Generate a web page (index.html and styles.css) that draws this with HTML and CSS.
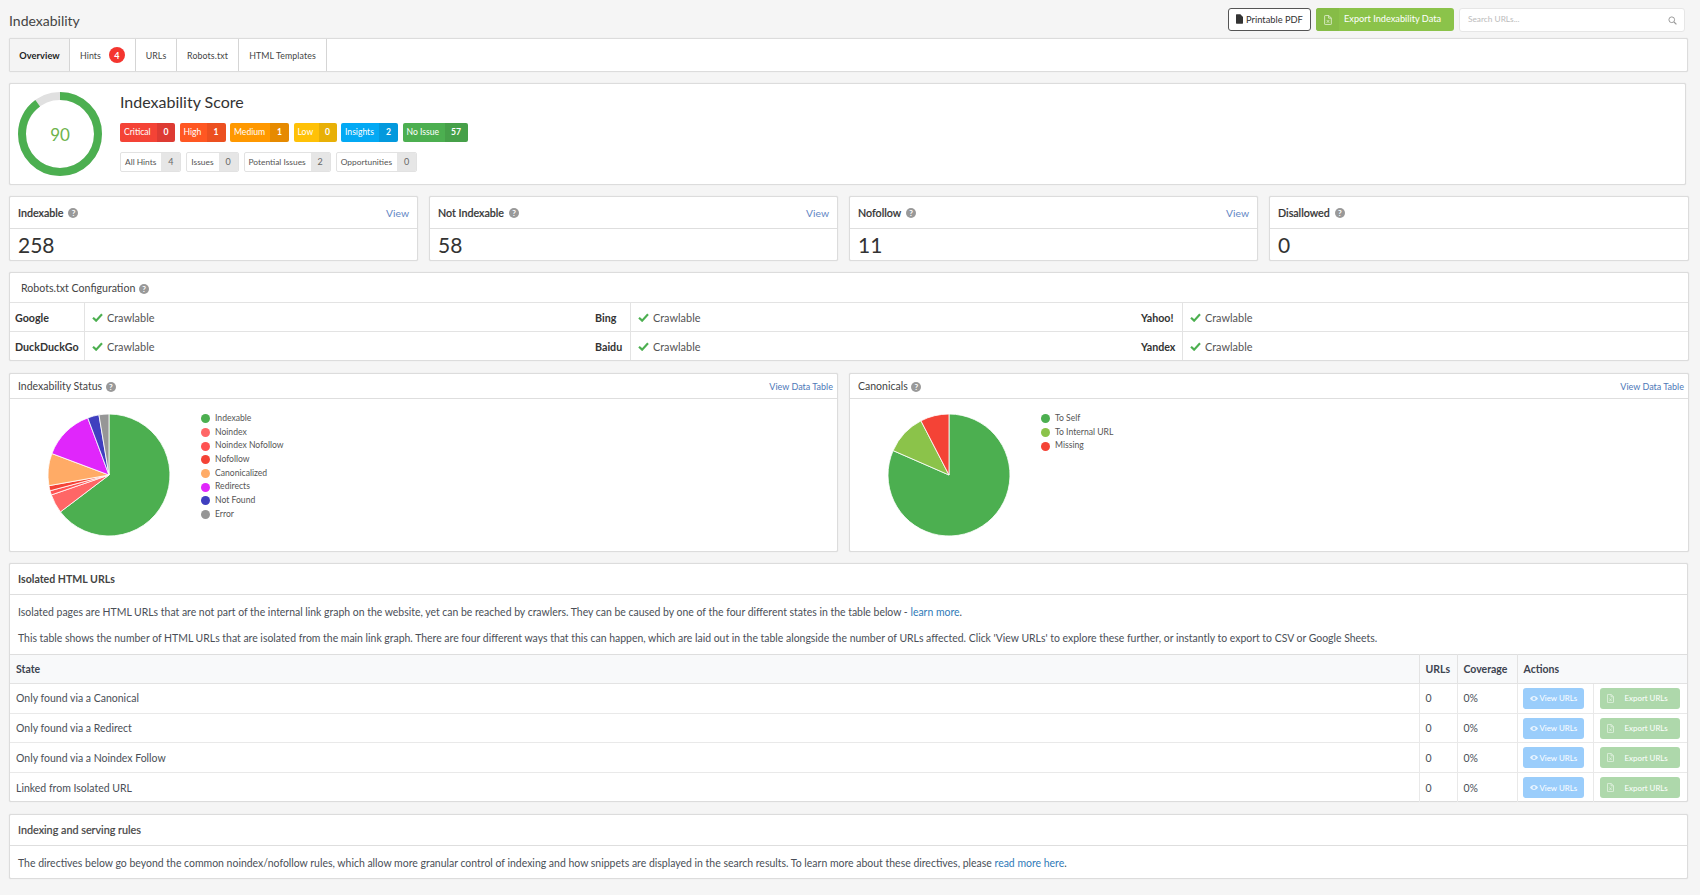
FILE: index.html
```html
<!DOCTYPE html>
<html lang="en">
<head>
<meta charset="utf-8">
<title>Indexability</title>
<link rel="stylesheet" href="styles.css">
</head>
<body>
<svg class="defs" width="0" height="0" aria-hidden="true">
  <symbol id="file" viewBox="0 0 12 16"><path d="M1 0h6.5L12 4.5V15a1 1 0 0 1-1 1H1a1 1 0 0 1-1-1V1a1 1 0 0 1 1-1z" fill="currentColor"/></symbol>
  <symbol id="xls" viewBox="0 0 12 16"><path fill="none" stroke="currentColor" stroke-width="1.3" d="M1.6.7h5.6l4.1 4.1v9.5a1 1 0 0 1-1 1H1.6a1 1 0 0 1-1-1V1.700a1 1 0 0 1 1-1zM7 1v4h4"/><path fill="none" stroke="currentColor" stroke-width="1.2" d="M4 8l4 4.500M8 8l-4 4.500"/></symbol>
  <symbol id="eye" viewBox="0 0 16 10"><path fill="currentColor" d="M8 0C4.600 0 1.700 2 0 5c1.700 3 4.600 5 8 5s6.300-2 8-5c-1.700-3-4.600-5-8-5zm0 8a3 3 0 1 1 0-6 3 3 0 0 1 0 6z"/></symbol>
  <symbol id="check" viewBox="0 0 12 10"><path fill="none" stroke="currentColor" stroke-width="2.400" d="M1 5.200l3.500 3.300L11 1.500"/></symbol>
</svg>

<header class="topbar">
  <h1 class="title">Indexability</h1>
  <div class="top-actions">
    <button class="btn-pdf"><svg class="ico-pdf"><use href="#file"/></svg>Printable PDF</button>
    <button class="btn-export"><span class="btn-export-ico"><svg class="ico-xls"><use href="#xls"/></svg></span><span class="btn-export-text">Export Indexability Data</span></button>
    <div class="search"><span>Search URLs...</span>
      <svg class="ico-search" viewBox="0 0 12 12"><circle cx="5" cy="5" r="3.800" fill="none" stroke="currentColor" stroke-width="1.300"/><path d="M8 8l3.200 3.200" stroke="currentColor" stroke-width="1.500"/></svg>
    </div>
  </div>
</header>

<nav class="card tabs">
  <a class="tab tab-overview active">Overview</a>
  <a class="tab tab-hints">Hints <span class="count">4</span></a>
  <a class="tab tab-urls">URLs</a>
  <a class="tab tab-robots">Robots.txt</a>
  <a class="tab tab-html">HTML Templates</a>
</nav>

<section class="card score">
  <div class="ring">
    <svg viewBox="0 0 84 84" width="84" height="84">
      <circle class="ring-bg" cx="42" cy="42" r="38"/>
      <circle class="ring-fg" cx="42" cy="42" r="38" pathLength="100" stroke-dasharray="90 100" transform="rotate(-90 42 42)"/>
    </svg>
    <span class="ring-val">90</span>
  </div>
  <div class="score-body">
    <h2 class="score-title">Indexability Score</h2>
    <div class="badges">
      <span class="badge critical"><b>Critical</b><i>0</i></span>
      <span class="badge high"><b>High</b><i>1</i></span>
      <span class="badge medium"><b>Medium</b><i>1</i></span>
      <span class="badge low"><b>Low</b><i>0</i></span>
      <span class="badge insights"><b>Insights</b><i>2</i></span>
      <span class="badge noissue"><b>No Issue</b><i>57</i></span>
    </div>
    <div class="filters">
      <span class="filter"><b>All Hints</b><i>4</i></span>
      <span class="filter"><b>Issues</b><i>0</i></span>
      <span class="filter"><b>Potential Issues</b><i>2</i></span>
      <span class="filter"><b>Opportunities</b><i>0</i></span>
    </div>
  </div>
</section>

<section class="stats">
  <div class="card stat"><div class="stat-head"><span class="stat-label">Indexable <span class="help">?</span></span><a class="link-view">View</a></div><div class="stat-val">258</div></div>
  <div class="card stat"><div class="stat-head"><span class="stat-label">Not Indexable <span class="help">?</span></span><a class="link-view">View</a></div><div class="stat-val">58</div></div>
  <div class="card stat"><div class="stat-head"><span class="stat-label">Nofollow <span class="help">?</span></span><a class="link-view">View</a></div><div class="stat-val">11</div></div>
  <div class="card stat"><div class="stat-head"><span class="stat-label">Disallowed <span class="help">?</span></span></div><div class="stat-val">0</div></div>
</section>

<section class="card robots">
  <div class="robots-head">Robots.txt Configuration <span class="help">?</span></div>
  <div class="robots-grid">
    <div class="r-name">Google</div><div class="r-val"><svg class="ico-check"><use href="#check"/></svg>Crawlable</div>
    <div class="r-name">Bing</div><div class="r-val"><svg class="ico-check"><use href="#check"/></svg>Crawlable</div>
    <div class="r-name">Yahoo!</div><div class="r-val"><svg class="ico-check"><use href="#check"/></svg>Crawlable</div>
    <div class="r-name">DuckDuckGo</div><div class="r-val"><svg class="ico-check"><use href="#check"/></svg>Crawlable</div>
    <div class="r-name">Baidu</div><div class="r-val"><svg class="ico-check"><use href="#check"/></svg>Crawlable</div>
    <div class="r-name">Yandex</div><div class="r-val"><svg class="ico-check"><use href="#check"/></svg>Crawlable</div>
  </div>
</section>

<section class="charts">
  <div class="card chart">
    <div class="chart-head"><span>Indexability Status <span class="help">?</span></span><a class="link-table">View Data Table</a></div>
    <div class="chart-body">
      <svg class="pie" viewBox="-61 -61 122 122" width="124" height="124">
        <g stroke="#fff" stroke-width="0.800" stroke-linejoin="round">
          <path fill="#4caf50" d="M0 0V-60A60 60 0 1 1-47.800 36.300Z"/>
          <path fill="#ff6666" d="M0 0L-47.800 36.300A60 60 0 0 1-56.700 19.600Z"/>
          <path fill="#ff5252" d="M0 0L-56.700 19.600A60 60 0 0 1-58 15.500Z"/>
          <path fill="#f44336" d="M0 0L-58 15.500A60 60 0 0 1-59.100 10.500Z"/>
          <path fill="#ffab66" d="M0 0L-59.100 10.500A60 60 0 0 1-56.200 -21.100Z"/>
          <path fill="#e026fb" d="M0 0L-56.200 -21.100A60 60 0 0 1-20.900 -56.200Z"/>
          <path fill="#3f3fbf" d="M0 0L-20.900 -56.200A60 60 0 0 1-9.900 -59.200Z"/>
          <path fill="#969696" d="M0 0L-9.900 -59.200A60 60 0 0 1 0 -60Z"/>
        </g>
      </svg>
      <ul class="legend">
        <li><span class="dot c-green"></span>Indexable</li>
        <li><span class="dot c-salmon"></span>Noindex</li>
        <li><span class="dot c-coral"></span>Noindex Nofollow</li>
        <li><span class="dot c-red"></span>Nofollow</li>
        <li><span class="dot c-orange"></span>Canonicalized</li>
        <li><span class="dot c-magenta"></span>Redirects</li>
        <li><span class="dot c-blue"></span>Not Found</li>
        <li><span class="dot c-gray"></span>Error</li>
      </ul>
    </div>
  </div>
  <div class="card chart">
    <div class="chart-head"><span>Canonicals <span class="help">?</span></span><a class="link-table">View Data Table</a></div>
    <div class="chart-body">
      <svg class="pie" viewBox="-61 -61 122 122" width="124" height="124">
        <g stroke="#fff" stroke-width="0.800" stroke-linejoin="round">
          <path fill="#4caf50" d="M0 0V-60A60 60 0 1 1-55 -24Z"/>
          <path fill="#8bc34a" d="M0 0L-55 -24A60 60 0 0 1-27.600 -53.300Z"/>
          <path fill="#f44336" d="M0 0L-27.600 -53.300A60 60 0 0 1 0 -60Z"/>
        </g>
      </svg>
      <ul class="legend">
        <li><span class="dot c-green"></span>To Self</li>
        <li><span class="dot c-lime"></span>To Internal URL</li>
        <li><span class="dot c-red"></span>Missing</li>
      </ul>
    </div>
  </div>
</section>

<section class="card isolated">
  <div class="sec-head">Isolated HTML URLs</div>
  <div class="sec-text">
    <p>Isolated pages are HTML URLs that are not part of the internal link graph on the website, yet can be reached by crawlers. They can be caused by one of the four different states in the table below - <a>learn more</a>.</p>
    <p>This table shows the number of HTML URLs that are isolated from the main link graph. There are four different ways that this can happen, which are laid out in the table alongside the number of URLs affected. Click 'View URLs' to explore these further, or instantly to export to CSV or Google Sheets.</p>
  </div>
  <table class="iso-table">
    <colgroup><col class="w-state"><col class="w-urls"><col class="w-cov"><col class="w-view"><col></colgroup>
    <thead><tr><th>State</th><th>URLs</th><th>Coverage</th><th colspan="2">Actions</th></tr></thead>
    <tbody>
      <tr><td>Only found via a Canonical</td><td>0</td><td>0%</td><td class="col-view"><a class="b-view"><svg class="ico-eye"><use href="#eye"/></svg>View URLs</a></td><td class="col-exp"><a class="b-exp"><svg class="ico-xls2"><use href="#xls"/></svg>Export URLs</a></td></tr>
      <tr><td>Only found via a Redirect</td><td>0</td><td>0%</td><td class="col-view"><a class="b-view"><svg class="ico-eye"><use href="#eye"/></svg>View URLs</a></td><td class="col-exp"><a class="b-exp"><svg class="ico-xls2"><use href="#xls"/></svg>Export URLs</a></td></tr>
      <tr><td>Only found via a Noindex Follow</td><td>0</td><td>0%</td><td class="col-view"><a class="b-view"><svg class="ico-eye"><use href="#eye"/></svg>View URLs</a></td><td class="col-exp"><a class="b-exp"><svg class="ico-xls2"><use href="#xls"/></svg>Export URLs</a></td></tr>
      <tr><td>Linked from Isolated URL</td><td>0</td><td>0%</td><td class="col-view"><a class="b-view"><svg class="ico-eye"><use href="#eye"/></svg>View URLs</a></td><td class="col-exp"><a class="b-exp"><svg class="ico-xls2"><use href="#xls"/></svg>Export URLs</a></td></tr>
    </tbody>
  </table>
</section>

<section class="card rules">
  <div class="sec-head rules-head">Indexing and serving rules</div>
  <div class="sec-text rules-text">
    <p>The directives below go beyond the common noindex/nofollow rules, which allow more granular control of indexing and how snippets are displayed in the search results. To learn more about these directives, please <a>read more here</a>.</p>
  </div>
</section>
</body>
</html>
```
FILE: styles.css
```css
* { box-sizing: border-box; }
html, body { margin: 0; height: 895px; overflow: hidden; }
body {
  padding: 0 11px 0 9px;
  background: #f5f5f5;
  font-family: Lato, "Noto Sans", sans-serif;
  font-size: 10.500px;
  color: #3d4450;
}
.defs { position: absolute; }
.card {
  background: #fff;
  border: 1px solid #dcdcdc;
  border-radius: 2px;
  box-shadow: 0 0 1px #cfcfcf;
}

/* top bar */
.topbar { height: 38px; display: flex; align-items: flex-start; justify-content: space-between; padding-right: 4px; }
.title { margin: 13px 0 0; font-size: 14px; line-height: 16px; font-weight: 400; color: #444; }
.top-actions { display: flex; gap: 5px; margin-top: 8px; }
button { font-family: inherit; cursor: pointer; }
.btn-pdf {
  width: 83px; height: 23px; padding: 0 0 1px; background: #fff; border: 1px solid #555; border-radius: 3px;
  color: #333; font-size: 9.300px; display: flex; align-items: center; justify-content: center; gap: 3px;
}
.ico-pdf { width: 7px; height: 10px; color: #333; }
.btn-export {
  width: 138px; height: 23px; padding: 0; background: #8bc34a; border: 0; border-radius: 3px;
  color: #fff; font-size: 9.200px; display: flex; align-items: center;
}
.btn-export-ico { width: 23px; height: 23px; display: flex; align-items: center; justify-content: center; background: #86bc47; border-radius: 3px 0 0 3px; }
.ico-xls { width: 8px; height: 10px; color: #e6f2d8; }
.btn-export-text { padding: 0 0 2px 5px; }
.search {
  width: 226px; height: 24px; background: #fff; border: 1px solid #e6e6e6; border-radius: 3px;
  color: #bbb; font-size: 8.300px; display: flex; align-items: center; justify-content: space-between; padding: 0 7px 2px 8px;
}
.ico-search { width: 9px; height: 9px; color: #999; margin-top: 2px; }

/* tabs */
.tabs { height: 34px; width: 1679px; display: flex; }
.tab { display: flex; align-items: center; justify-content: center; border-right: 1px solid #d5d5d5; font-size: 8.800px; color: #444; letter-spacing: .1px; }
.tab.active { background: #f4f4f4; color: #222; font-weight: 700; font-size: 9.200px; }
.tab-overview { width: 60px; }
.tab-hints { width: 66px; gap: 8px; }
.tab-urls { width: 41px; }
.tab-robots { width: 62px; }
.tab-html { width: 88px; }
.count {
  width: 16px; height: 16px; border-radius: 50%; background: #f4352f; color: #fff; font-weight: 700; font-size: 9px;
  display: flex; align-items: center; justify-content: center;
}

/* score */
.score { height: 102px; width: 1677px; margin-top: 11px; display: flex; }
.ring { position: relative; width: 84px; height: 84px; margin: 8px 0 0 8px; flex: none; }
.ring svg { display: block; }
.ring-bg { fill: none; stroke: #e0e0e0; stroke-width: 8; }
.ring-fg { fill: none; stroke: #4caf50; stroke-width: 8; }
.ring-val { position: absolute; inset: 0; display: flex; align-items: center; justify-content: center; font-size: 17px; color: #6eb34c; }
.score-body { margin-left: 18px; }
.score-title { margin: 7px 0 0; font-size: 16px; line-height: 21px; font-weight: 400; color: #333; }
.badges { display: flex; gap: 4.500px; margin-top: 11px; }
.badge { height: 19px; display: flex; border-radius: 2px; overflow: hidden; color: #fff; font-size: 8.600px; line-height: 19px; white-space: nowrap; }
.badge b { font-weight: 400; padding-left: 4px; }
.badge i { font-style: normal; font-weight: 700; text-align: center; }
.critical b { background: #f44336; width: 37px; } .critical i { background: #dd3b33; width: 18px; }
.high b { background: #ff5722; width: 27px; } .high i { background: #ec5020; width: 19px; }
.medium b { background: #ff9800; width: 40px; } .medium i { background: #e68a00; width: 19px; }
.low b { background: #ffc107; width: 25px; } .low i { background: #e8b007; width: 18px; }
.insights b { background: #03a9f4; width: 38px; } .insights i { background: #0399dd; width: 19px; }
.noissue b { background: #4caf50; width: 42px; } .noissue i { background: #46a049; width: 23px; }
.filters { display: flex; gap: 5px; margin-top: 10px; }
.filter { height: 20px; display: flex; border: 1px solid #e2e2e2; border-radius: 2px; font-size: 8.400px; line-height: 18px; color: #555; overflow: hidden; white-space: nowrap; }
.filter b { font-weight: 400; padding: 0 5px 0 4px; }
.filter i { font-style: normal; background: #e6e6e6; width: 19px; text-align: center; color: #666; font-size: 9px; }

/* stats */
.stats { display: grid; grid-template-columns: 409px 409px 409px 1fr; gap: 11px; margin-top: 11px; width: 1680px; }
.stat { height: 65px; }
.stat-head { height: 32px; border-bottom: 1px solid #dedede; display: flex; align-items: center; justify-content: space-between; padding: 0 8px; }
.stat-label { font-size: 10.700px; font-weight: 500; color: #333; display: flex; align-items: center; gap: 4px; -webkit-text-stroke: .2px #333; }
.stat-label .help { -webkit-text-stroke: 0; }
.link-view { color: #5f86c4; font-size: 10.300px; }
.stat-val { font-size: 21px; line-height: 32px; padding-left: 8px; color: #333; }
.help {
  display: inline-flex; width: 10px; height: 10px; border-radius: 50%; background: #999; color: #fff; font-size: 8px; font-weight: 700;
  align-items: center; justify-content: center; line-height: 10px; vertical-align: middle; margin-left: 1px;
}

/* robots */
.robots { height: 89px; width: 1680px; margin-top: 11px; }
.robots-head { height: 30px; padding-left: 11px; line-height: 30px; border-bottom: 1px solid #e3e3e3; font-size: 10.600px; color: #444; }
.robots-grid { display: grid; grid-template-columns: 75px 505px 41px 505px 47px 1fr; grid-auto-rows: 28.500px; }
.r-name { padding: 1px 0 0 5px; font-weight: 700; font-size: 10.700px; line-height: 28px; color: #333; border-right: 1px solid #e3e3e3; }
.r-val { padding: 1px 0 0 7px; color: #555; font-size: 10.900px; display: flex; align-items: center; gap: 4px; }
.robots-grid > div:nth-child(-n+6) { border-bottom: 1px solid #e3e3e3; }
.ico-check { width: 11px; height: 9px; color: #4caf50; }

/* charts */
.charts { display: grid; grid-template-columns: 829px 840px; gap: 11px; margin-top: 12px; width: 1680px; }
.chart { height: 179px; }
.chart-head { height: 25px; padding: 0 4px 0 8px; display: flex; align-items: center; justify-content: space-between; border-bottom: 1px solid #dedede; font-size: 10.500px; color: #444; }
.link-table { font-size: 9px; color: #4d78b8; }
.chart-body { display: flex; align-items: flex-start; padding-top: 10px; }
.pie { margin: 4px 0 0 37px; flex: none; }
.legend { list-style: none; margin: 3px 0 0 30px; padding: 0; font-size: 8.600px; color: #555; }
.legend li { height: 13.700px; line-height: 13.700px; display: flex; align-items: center; gap: 5px; }
.dot { width: 9px; height: 9px; border-radius: 50%; }
.c-green { background: #4caf50; } .c-salmon { background: #ff6666; } .c-coral { background: #ff5252; }
.c-red { background: #f44336; } .c-orange { background: #ffab66; } .c-magenta { background: #e026fb; }
.c-blue { background: #3f3fbf; } .c-gray { background: #969696; } .c-lime { background: #8bc34a; }

/* isolated */
.isolated { height: 239px; width: 1679px; margin-top: 11px; }
.sec-head { height: 31px; padding-left: 8px; line-height: 30px; border-bottom: 1px solid #dedede; font-weight: 700; font-size: 10.600px; color: #444; }
.sec-text { padding: 10px 8px 0; height: 59px; font-size: 10.440px; color: #4a4f57; }
.sec-text p { margin: 0 0 11.200px; line-height: 15px; }
.sec-text a { color: #2f7ab8; }
.iso-table { width: 100%; border-collapse: collapse; table-layout: fixed; font-size: 10.500px; color: #4a4f57; }
.w-state { width: 1409px; }
.w-urls { width: 38px; }
.w-cov { width: 60px; }
.w-view { width: 76px; }
.iso-table th { height: 29px; background: #f8f9fa; border-top: 1px solid #dedede; border-bottom: 1px solid #e3e3e3; border-right: 1px solid #e3e3e3; text-align: left; padding: 0 6px; font-weight: 700; color: #3d4450; }
.iso-table th:last-child { border-right: 0; }
.iso-table td { height: 29.700px; padding: 0 6px; border-bottom: 1px solid #e9e9e9; border-right: 1px solid #e9e9e9; }
.iso-table tr:last-child td { border-bottom: 0; }
.iso-table td:last-child { border-right: 0; }
.iso-table .col-view { padding-left: 5px; }
.iso-table .col-exp { padding: 0 0 0 6px; }
.b-view, .b-exp { display: flex; align-items: center; height: 21px; border-radius: 3px; color: #fff; font-size: 7.900px; }
.b-view { width: 61px; background: #9acdfb; padding-left: 7px; gap: 2px; }
.b-exp { width: 80px; background: #aed8ab; padding-left: 7px; gap: 11px; }
.ico-eye { width: 8px; height: 5px; color: #e7f3fe; }
.ico-xls2 { width: 7px; height: 9px; color: #eaf5e9; }

/* rules */
.rules { height: 65px; width: 1679px; margin-top: 12px; }
.rules-head { font-weight: 400; font-size: 10.800px; -webkit-text-stroke: .2px #444; }
.rules-text { height: auto; padding-top: 10px; font-size: 10.480px; }
```
